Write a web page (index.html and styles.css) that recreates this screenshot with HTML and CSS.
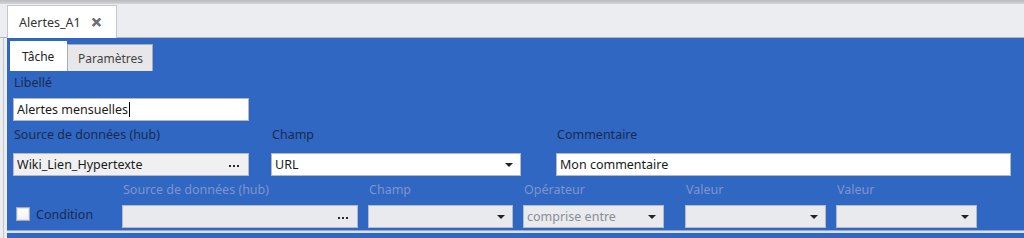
FILE: index.html
```html
<!DOCTYPE html>
<html lang="fr">
<head>
<meta charset="utf-8">
<title>Alertes_A1</title>
<link rel="stylesheet" href="styles.css">
</head>
<body>
<div class="topbar"></div>
<div class="doctabs">
  <div class="doctab"><span class="doctab-title">Alertes_A1</span><span class="doctab-close">&#x2715;</span></div>
</div>
<div class="docbody">
  <div class="panel">
    <div class="tabs">
      <div class="tab active">Tâche</div>
      <div class="tab">Paramètres</div>
    </div>
    <div class="content">
      <div class="row row1">
        <div class="field w-libelle">
          <div class="label">Libellé</div>
          <div class="input white"><span class="val">Alertes mensuelles</span><span class="caret"></span></div>
        </div>
      </div>
      <div class="row row2">
        <div class="field w-src">
          <div class="label">Source de données (hub)</div>
          <div class="input grey"><span class="val">Wiki_Lien_Hypertexte</span><span class="dots"><i></i><i></i><i></i></span></div>
        </div>
        <div class="field w-champ">
          <div class="label">Champ</div>
          <div class="input white"><span class="val">URL</span><span class="arrow"></span></div>
        </div>
        <div class="field w-comment">
          <div class="label">Commentaire</div>
          <div class="input white"><span class="val">Mon commentaire</span></div>
        </div>
      </div>
      <div class="row row3">
        <div class="check-wrap">
          <span class="checkbox"></span><span class="check-label">Condition</span>
        </div>
        <div class="field w-src2">
          <div class="label disabled">Source de données (hub)</div>
          <div class="input dis"><span class="val"></span><span class="dots"><i></i><i></i><i></i></span></div>
        </div>
        <div class="field w-small">
          <div class="label disabled">Champ</div>
          <div class="input dis"><span class="val"></span><span class="arrow"></span></div>
        </div>
        <div class="field w-small2">
          <div class="label disabled">Opérateur</div>
          <div class="input dis"><span class="val muted">comprise entre</span><span class="arrow"></span></div>
        </div>
        <div class="field w-small2 gap-wide">
          <div class="label disabled">Valeur</div>
          <div class="input dis"><span class="val"></span><span class="arrow"></span></div>
        </div>
        <div class="field w-small2">
          <div class="label disabled">Valeur</div>
          <div class="input dis"><span class="val"></span><span class="arrow"></span></div>
        </div>
      </div>
    </div>
    <div class="bottom"></div>
  </div>
</div>
</body>
</html>
```
FILE: styles.css
```css
* { box-sizing: border-box; }
html, body { margin: 0; padding: 0; }
body {
  width: 1024px;
  height: 238px;
  overflow: hidden;
  background: #ecedf0;
  font-family: "Noto Sans", "Open Sans", sans-serif;
  font-size: 12.5px;
  color: #1d2a4c;
}
.topbar {
  height: 4px;
  background: linear-gradient(#b9b9be, #d4d4d8);
}
.doctabs {
  height: 34px;
  padding-left: 7px;
  display: flex;
  align-items: flex-end;
  border-bottom: 1px solid #b4b6bd;
}
.doctab {
  width: 110px;
  height: 33px;
  margin-bottom: -1px;
  background: #ffffff;
  border: 1px solid #c6c7cc;
  border-bottom: none;
  display: flex;
  align-items: center;
  padding-left: 11px;
  font-size: 12.5px;
  color: #333;
}
.doctab-close {
  margin-left: 10px;
  font-size: 13px;
  font-weight: bold;
  color: #707074;
  -webkit-text-stroke: 0.6px #707074;
}
.docbody {
  margin-left: 3px;
  border-left: 1px solid #c5c6cc;
  padding-left: 3px;
  height: 200px;
}
.panel {
  background: #2f67c3;
  height: 200px;
  padding-top: 1px;
}
.tabs {
  height: 32px;
  display: flex;
  align-items: flex-end;
  padding-left: 3px;
  padding-top: 1px;
}
.tab {
  height: 27px;
  padding: 0 9px 0 10px;
  display: flex;
  align-items: center;
  background: #e7e7e9;
  border: 1px solid #a9abb2;
  border-bottom: none;
  color: #444;
  font-size: 12px;
}
.tab.active {
  width: 57px;
  height: 30px;
  background: #ffffff;
  border-color: #ffffff;
  color: #222;
  padding: 0 0 0 11px;
}
.content {
  height: 159px;
  padding-left: 6px;
  padding-top: 4px;
}
.row { display: flex; align-items: flex-end; }
.row2 { margin-top: 6px; }
.row3 { margin-top: 6px; }
.field { display: flex; flex-direction: column; }
.label {
  height: 16px;
  line-height: 16px;
  padding-left: 1px;
  white-space: nowrap;
  color: #1c2a4d;
}
.label.disabled { color: #7f95cc; }
.row1 .label { margin-bottom: 7px; }
.row2 .label { margin-bottom: 10px; }
.row3 .label { margin-bottom: 7px; }
.input {
  height: 23px;
  border: 1px solid #b4b8c2;
  display: flex;
  align-items: center;
  padding-left: 3px;
  padding-right: 6px;
  color: #1a1a1a;
  white-space: nowrap;
}
.input.white { background: #ffffff; }
.input.grey { background: #f0f0f2; }
.input.dis { background: #e9eaee; border-color: #b6bac4; }
.val { flex: 1; overflow: hidden; }
.val.muted { color: #8a8d96; }
.row1 .val { flex: 0 0 auto; }
.caret {
  width: 1px;
  height: 15px;
  background: #000;
  margin-left: 1px;
}
.dots {
  display: flex;
  gap: 2px;
  padding-right: 3px;
}
.dots i {
  width: 2px;
  height: 2px;
  background: #2a2a2a;
  display: block;
  margin-top: 3px;
}
.arrow {
  width: 0;
  height: 0;
  border-left: 4px solid transparent;
  border-right: 4px solid transparent;
  border-top: 4px solid #222;
  margin-right: 1px;
}
.w-libelle { width: 236px; }
.w-src { width: 236px; }
.w-champ { width: 250px; margin-left: 22px; }
.w-comment { width: 455px; margin-left: 35px; }
.check-wrap {
  width: 109px;
  height: 23px;
  display: flex;
  align-items: center;
  padding-left: 3px;
}
.checkbox {
  width: 14px;
  height: 14px;
  background: linear-gradient(#ffffff, #f2f2f4);
  border: 1px solid #a6a9b2;
  box-shadow: inset 0 0 0 1px #e4e5ea;
  margin-top: -6px;
}
.check-label { margin-left: 6px; margin-top: -4px; color: #1c2a4d; }
.w-src2 { width: 236px; }
.w-small { width: 145px; margin-left: 10px; }
.w-small2 { width: 141px; margin-left: 10px; }
.w-small2.gap-wide { margin-left: 21px; }
.bottom {
  height: 3px;
  background: #d9e2f3;
  border-top: 1px solid #8fa9dc;
}
```
